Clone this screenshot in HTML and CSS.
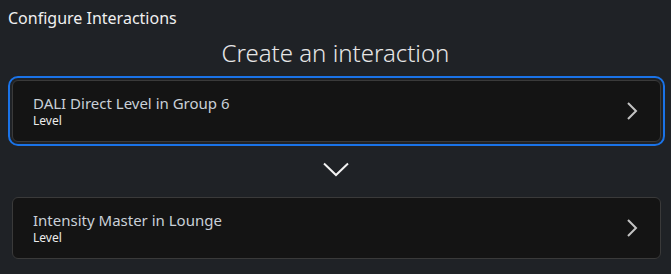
FILE: index.html
```html
<!DOCTYPE html>
<html lang="en">
<head>
  <meta charset="UTF-8">
  <meta name="viewport" content="width=device-width, initial-scale=1.0">
  <title>Configure Interactions</title>
  <link rel="stylesheet" href="styles.css">
</head>
<body>
  <div class="title">Configure Interactions</div>
  <h1>Create an interaction</h1>

  <div class="card selected">
    <div class="card-text">
      <div class="card-name">DALI Direct Level in Group 6</div>
      <div class="card-type">Level</div>
    </div>
    <svg class="chevron" width="12" height="20" viewBox="0 0 12 20">
      <path d="M2 2 L10 10 L2 18" fill="none" stroke="#c4c4c4" stroke-width="2"/>
    </svg>
  </div>

  <div class="arrow">
    <svg width="26" height="15" viewBox="0 0 26 15">
      <path d="M1 1.5 L13 13 L25 1.5" fill="none" stroke="#f2f2f2" stroke-width="2"/>
    </svg>
  </div>

  <div class="card">
    <div class="card-text">
      <div class="card-name">Intensity Master in Lounge</div>
      <div class="card-type">Level</div>
    </div>
    <svg class="chevron" width="12" height="20" viewBox="0 0 12 20">
      <path d="M2 2 L10 10 L2 18" fill="none" stroke="#c4c4c4" stroke-width="2"/>
    </svg>
  </div>
</body>
</html>
```

FILE: styles.css
```css
body {
  margin: 0;
  background-color: #1f2226;
  font-family: "Noto Sans", "Open Sans", sans-serif;
  color: #f0f0f0;
}
.title {
  padding: 7px 8px 0;
  font-size: 16px;
  line-height: 22px;
}
h1 {
  margin: 8px 0 0;
  text-align: center;
  font-size: 24px;
  font-weight: 300;
  line-height: 32px;
  color: #e6e6e6;
}
.card {
  display: flex;
  align-items: center;
  justify-content: space-between;
  height: 60px;
  margin: 0 10px 0 12px;
  padding: 0 20px;
  border: 1px solid #3a3a3a;
  border-radius: 6px;
  background-color: #141414;
}
.card.selected {
  margin-top: 11px;
  outline: 2px solid #1a73e8;
  outline-offset: 2px;
}
.card-name {
  font-size: 15px;
  line-height: 19px;
  color: #c9d0d8;
}
.card-type {
  font-size: 12px;
  line-height: 16px;
  color: #ececec;
}
.chevron {
  margin-right: 2px;
}
.arrow {
  display: flex;
  justify-content: center;
  padding: 20px 0 20px;
  height: 15px;
}
```
